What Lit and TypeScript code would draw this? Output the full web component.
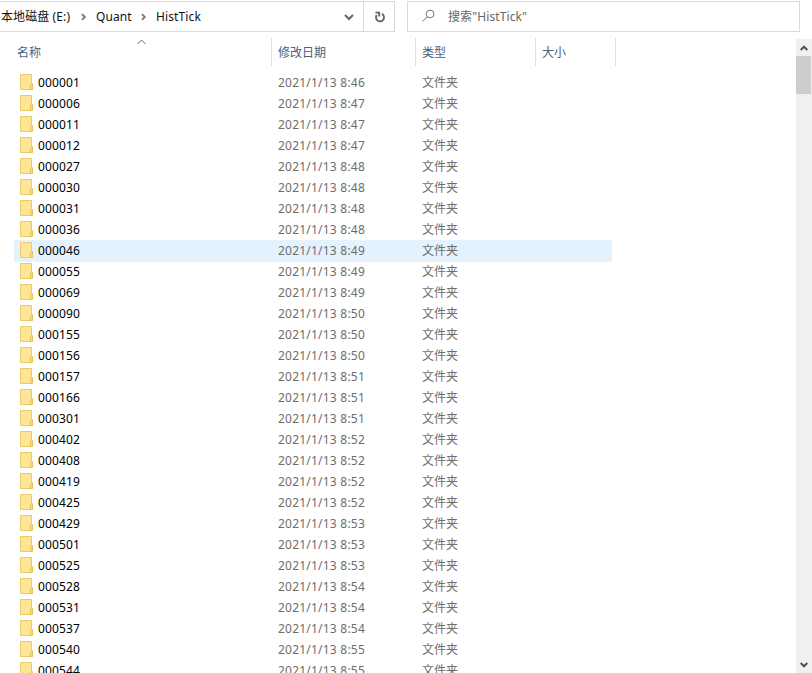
import { LitElement, html, css, svg } from "lit";
import { customElement, state } from "lit/decorators.js";
import { classMap } from "lit/directives/class-map.js";

interface Folder { name: string; modified: string }

const groups: [string, string[]][] = [
  ["8:46", ["000001"]],
  ["8:47", ["000006", "000011", "000012"]],
  ["8:48", ["000027", "000030", "000031", "000036"]],
  ["8:49", ["000046", "000055", "000069"]],
  ["8:50", ["000090", "000155", "000156"]],
  ["8:51", ["000157", "000166", "000301"]],
  ["8:52", ["000402", "000408", "000419", "000425"]],
  ["8:53", ["000429", "000501", "000525"]],
  ["8:54", ["000528", "000531", "000537"]],
  ["8:55", ["000540", "000544"]],
];

const folders: Folder[] = groups.flatMap(([time, names]) =>
  names.map((name) => ({ name, modified: `2021/1/13 ${time}` })));

const stroke = (w: number, h: number, d: string, cls: string) => html`
  <svg class=${cls} width=${w} height=${h} viewBox="0 0 ${w} ${h}">${svg`<path d=${d} />`}</svg>`;

@customElement("address-bar")
class AddressBar extends LitElement {
  static styles = css`
    :host { display: flex; height: 32px; padding-top: 1px; box-sizing: border-box; }
    .box { display: flex; align-items: center; height: 31px; box-sizing: border-box;
      border: 1px solid #d9d9d9; line-height: 18px; white-space: nowrap; }
    .path { width: 395px; border-left: 0; color: #111; }
    .crumb { flex: none; }
    .drive { width: 71px; margin-left: 1px; letter-spacing: 0.1px; }
    .quant { width: 36px; letter-spacing: 0.05px; }
    .hist { flex: 1; letter-spacing: 0.12px; }
    .icon { fill: none; flex: none; }
    .sep { stroke: #777; stroke-width: 1.8; margin: 1px 9px 0 9px; }
    .drop { stroke: #666; stroke-width: 2; margin: 1px 9px 0 0; }
    .refresh { display: flex; align-items: center; justify-content: center;
      width: 31px; height: 29px; box-sizing: border-box; border-left: 1px solid #d9d9d9; }
    .turn { stroke: #666; stroke-width: 1.9; margin: 1px 0 0 1px; }
    .search { width: 393px; margin-left: 12px; color: #666; }
    .lens { stroke: #777; stroke-width: 1; margin: 0 13px 2px 14px; }
    .query { letter-spacing: 0.1px; }
  `;
  render() {
    return html`
      <div class="box path">
        <span class="crumb drive">本地磁盘 (E:)</span>
        ${stroke(6, 8, "M1 1.2 L3.8 4 L1 6.8", "icon sep")}
        <span class="crumb quant">Quant</span>
        ${stroke(6, 8, "M1 1.2 L3.8 4 L1 6.8", "icon sep")}
        <span class="hist">HistTick</span>
        ${stroke(10, 7, "M1 1 L5 5 L9 1", "icon drop")}
        <span class="refresh">${stroke(12, 12, "M8 2.9 A4 4 0 1 1 2.7 4.1 M1.4 1.6 H5.2 V5.4", "icon turn")}</span>
      </div>
      <div class="box search">
        ${stroke(13, 13, "M12 5 A3.9 3.9 0 1 1 4.2 5 A3.9 3.9 0 1 1 12 5 M5.3 7.8 L0.7 12.3", "icon lens")}
        <span class="query">搜索"HistTick"</span>
      </div>`;
  }
}

@customElement("folder-list")
class FolderList extends LitElement {
  static styles = css`
    :host { display: block; flex: 1; min-width: 0; overflow: hidden; }
    .head { display: grid; grid-template-columns: 272px 144px 120px 80px; height: 28px;
      margin: 6px 0; color: #4c607a; line-height: 18px; }
    .cell { position: relative; box-sizing: border-box; border-right: 1px solid #e2e2e2; padding: 6px 0 0 6px; }
    .first { padding-left: 17px; }
    .sort { position: absolute; left: 137px; top: 1px; fill: none; stroke: #666; stroke-width: 1; }
    .row { display: grid; grid-template-columns: 24px 240px 144px 1fr; align-items: center;
      height: 21px; width: 598px; margin-left: 14px;
      line-height: 21px; color: #6d6d6d; white-space: nowrap; }
    .hover { background: #e4f2fd; box-shadow: 0 1px #e4f2fd; }
    .folder { margin: 0 0 1px 6px; display: block; }
    .back { fill: #ffe696; stroke: #ebca6c; }
    .flap { fill: #fbdc7c; stroke: #e6c25c; }
    .name { color: #000; letter-spacing: 0.12px; }
    .date { letter-spacing: 0.22px; }
  `;
  @state() private hovered = "000046";
  render() {
    return html`
      <div class="head">
        <span class="cell first">名称${stroke(9, 6, "M0.5 5 L4.5 1 L8.5 5", "sort")}</span>
        <span class="cell">修改日期</span>
        <span class="cell">类型</span>
        <span class="cell">大小</span>
      </div>
      ${folders.map((f) => html`
        <div class=${classMap({ row: true, hover: f.name === this.hovered })}>
          <svg class="folder" width="13" height="16" viewBox="0 0 13 16">
            <path class="back" d="M0.5 0.5 H11.5 V15.5 H0.5 Z" />
            <path class="flap" d="M10.5 15.5 V10.5 L11.5 9.5 H12.5 V15.5 Z" />
          </svg>
          <span class="name">${f.name}</span>
          <span class="date">${f.modified}</span>
          <span>文件夹</span>
        </div>`)}`;
  }
}

@customElement("scroll-bar")
class ScrollBar extends LitElement {
  static styles = css`
    :host { display: flex; flex-direction: column; align-items: center; width: 16px;
      margin-top: 7px; background: #f0f0f0; }
    .button { display: flex; align-items: center; justify-content: center; height: 17px; flex: none; }
    .thumb { width: 15px; height: 38px; background: #cdcdcd; align-self: flex-start; }
    .track { flex: 1; }
    .arrow { fill: none; stroke: #505050; stroke-width: 2; }
  `;
  render() {
    return html`
      <div class="button">${stroke(8, 6, "M0.7 5 L4 1.7 L7.3 5", "arrow")}</div>
      <div class="thumb"></div>
      <div class="track"></div>
      <div class="button">${stroke(8, 6, "M0.7 1 L4 4.3 L7.3 1", "arrow")}</div>`;
  }
}

@customElement("app-root")
class AppRoot extends LitElement {
  static styles = css`
    :host { display: flex; flex-direction: column; height: 673px; overflow: hidden; background: #fff;
      font-family: "Noto Sans", "Noto Sans CJK SC", sans-serif; font-size: 12px; }
    .body { display: flex; flex: 1; min-height: 0; }
  `;
  render() {
    return html`
      <address-bar></address-bar>
      <div class="body"><folder-list></folder-list><scroll-bar></scroll-bar></div>`;
  }
}
